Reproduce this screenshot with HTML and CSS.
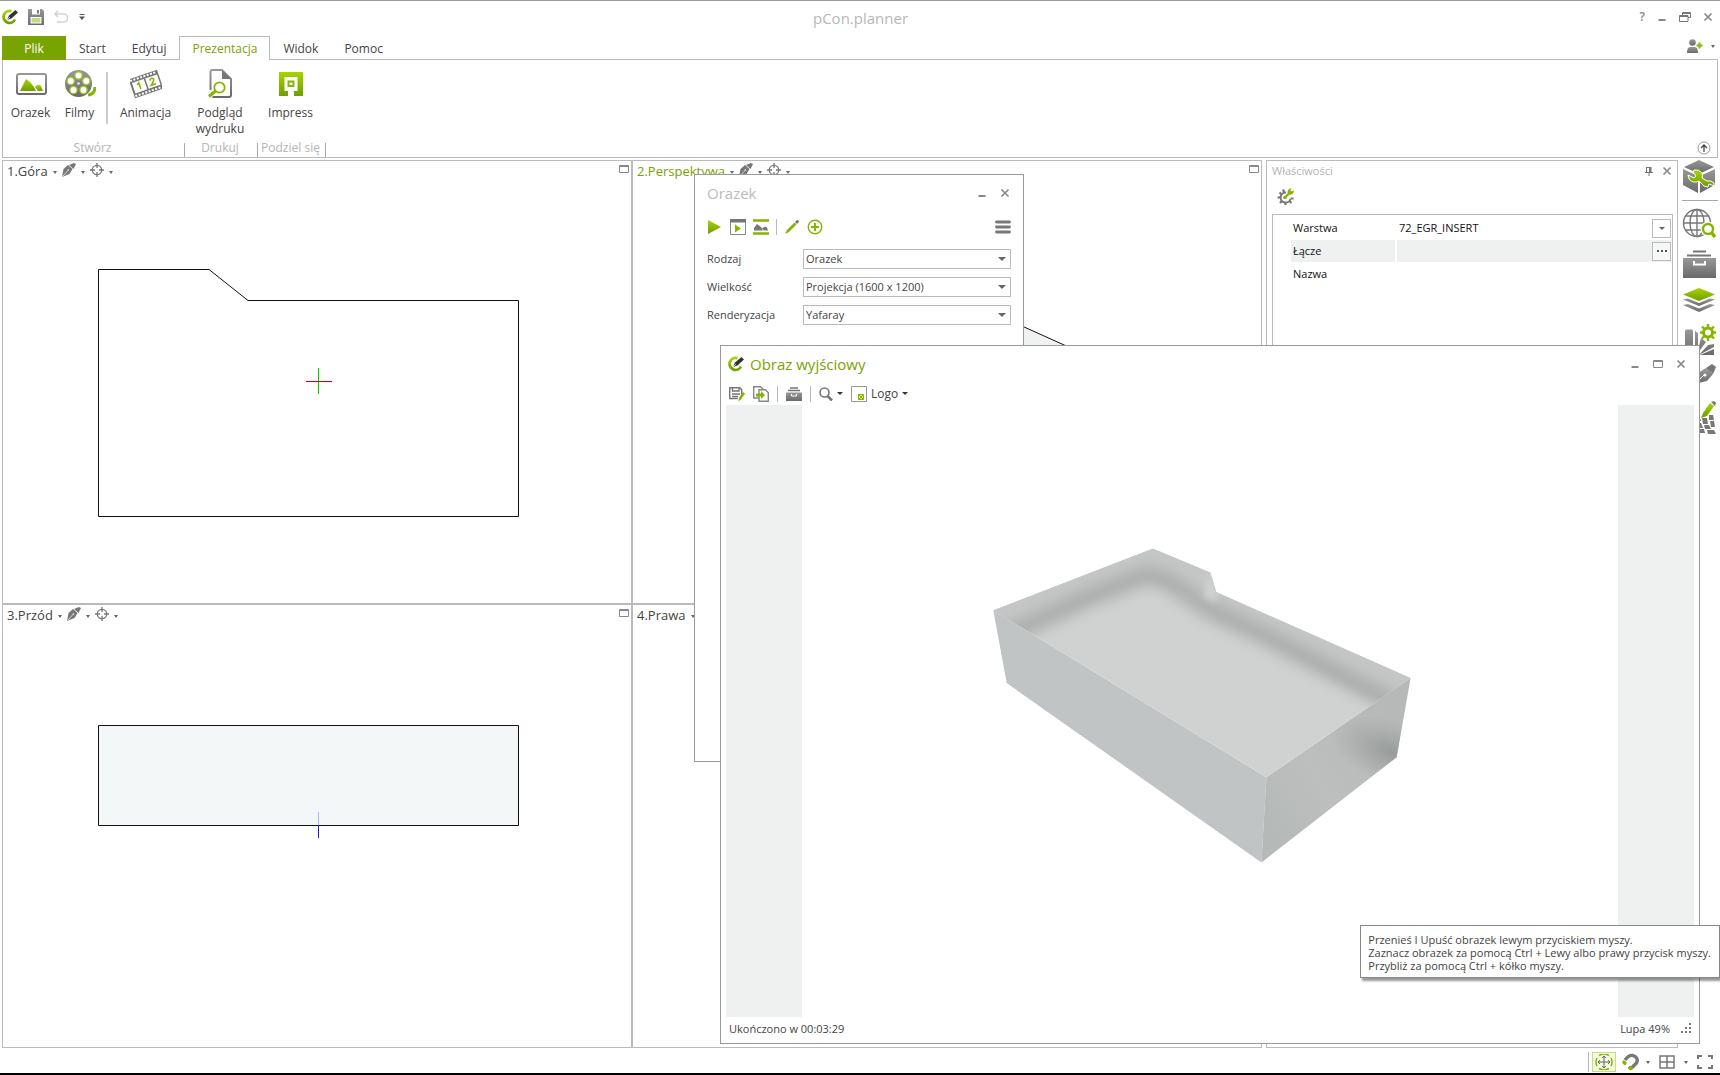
FILE: index.html
```html
<!DOCTYPE html>
<html lang="pl">
<head>
    <meta charset="UTF-8">
    <title>pCon.planner</title>
    <meta name="viewport" content="width=device-width, initial-scale=1.0">
    <link rel="stylesheet" href="styles.css">
</head>
<body>
    <!-- shared icons -->
    <svg class="sprite" aria-hidden="true">
        <defs>
            <linearGradient id="green" x1="0" y1="0" x2="0" y2="1">
                <stop offset="0" stop-color="#a8d400"/>
                <stop offset="1" stop-color="#6f9e00"/>
            </linearGradient>
            <linearGradient id="gray" x1="0" y1="0" x2="0" y2="1">
                <stop offset="0" stop-color="#989898"/>
                <stop offset="1" stop-color="#6a6a6a"/>
            </linearGradient>
        </defs>
        <symbol id="i-logo" viewBox="0 0 16 16">
            <path d="M9.500 2.200A6 6 0 1 0 13 10.500" fill="none" stroke="url(#green)" stroke-width="2.800"/>
            <path d="M5 11l2-4.500L13.500 1 16 3.500 9.500 9.500z" fill="#333"/>
            <path d="M5 11l3-3" stroke="#fff" stroke-width=".7"/>
        </symbol>
        <symbol id="i-pen" viewBox="0 0 14 14">
            <path d="M0 14l1.500-8L6 2l4.500 4L7.500 11z" fill="#777"/>
            <path d="M7 2l5-2 2 1-2.500 5z" fill="#777"/>
            <path d="M.5 13.500L6 7.500" stroke="#fff" stroke-width=".7"/>
            <circle cx="6.300" cy="7" r=".8" fill="#fff"/>
        </symbol>
        <symbol id="i-target" viewBox="0 0 14 14">
            <circle cx="7" cy="7" r="4.700" fill="none" stroke="#777" stroke-width="1.300"/>
            <path d="M7 0v5M7 9v5M0 7h5M9 7h5" stroke="#777" stroke-width="1.300"/>
        </symbol>
        <symbol id="i-close" viewBox="0 0 12 12">
            <path d="M2.500 2.500l7 7M9.500 2.500l-7 7" stroke="#888" stroke-width="1.700"/>
        </symbol>
        <symbol id="i-min" viewBox="0 0 12 12">
            <path d="M2.500 9h7" stroke="#888" stroke-width="2"/>
        </symbol>
        <symbol id="i-max" viewBox="0 0 12 12">
            <path d="M1.500 2.500h9v7h-9zM1.500 3.500h9" fill="none" stroke="#888"/>
        </symbol>
    </svg>

    <div class="app">
        <header class="titlebar">
            <div class="quick">
                <svg class="icon16"><use href="#i-logo"/></svg>
                <button class="plain" aria-label="Zapisz">
                    <svg class="icon16" viewBox="0 0 16 16">
                        <path d="M0 0h14l2 2v14H0z" fill="url(#gray)"/>
                        <path d="M4 0h8v5.500H4z" fill="#fff"/><path d="M9 1h2v3.500H9z" fill="#777"/>
                        <path d="M2.500 8h11v6.500h-11z" fill="#fff"/><path d="M3.500 9h9v4.500h-9z" fill="#c4dd84"/>
                    </svg>
                </button>
                <button class="plain" aria-label="Cofnij">
                    <svg class="icon14" viewBox="0 0 14 14"><path d="M4 1L1 4l3 3M1 4h8.500a3.500 3.500 0 0 1 0 8H3" fill="none" stroke="#d4d4d4" stroke-width="1.600"/></svg>
                </button>
                <button class="plain" aria-label="Dostosuj">
                    <svg class="icon8" viewBox="0 0 8 8"><path d="M1.500 1.500h5" stroke="#555"/><path d="M1 3.500h6L4 7z" fill="#555"/></svg>
                </button>
            </div>
            <h1 class="app-title">pCon.planner</h1>
            <div class="win-buttons main-buttons">
                <button class="plain help" aria-label="Pomoc">?</button>
                <button class="plain" aria-label="Minimalizuj"><svg class="icon12"><use href="#i-min"/></svg></button>
                <button class="plain" aria-label="Przywróć">
                    <svg class="icon12" viewBox="0 0 12 12"><path d="M3.500 4V1.500h8v5H9M.5 4.500H9v6H.5zM.5 5.500H9M3.500 2.500h8" fill="none" stroke="#777"/></svg>
                </button>
                <button class="plain" aria-label="Zamknij"><svg class="icon12"><use href="#i-close"/></svg></button>
            </div>
        </header>

        <nav class="tabs">
            <button class="tab file">Plik</button>
            <button class="tab">Start</button>
            <button class="tab">Edytuj</button>
            <button class="tab active">Prezentacja</button>
            <button class="tab">Widok</button>
            <button class="tab">Pomoc</button>
            <button class="plain user" aria-label="Konto">
                <svg width="16" height="14" viewBox="0 0 16 14">
                    <circle cx="5.500" cy="3.500" r="3.300" fill="url(#gray)"/>
                    <path d="M0 14c0-4 1-6 3-6h5c2 0 3 2 3 6z" fill="url(#gray)"/>
                    <path d="M12.500 3.500v6M9.500 6.500h6" stroke="#86b500" stroke-width="2"/>
                </svg>
                <i class="arrow small"></i>
            </button>
        </nav>

        <section class="ribbon">
            <div class="group create">
                <div class="group-items">
                    <button class="tool">
                        <svg viewBox="0 0 32 30">
                            <rect x="2" y="5" width="29" height="20" rx="2" fill="#fff" stroke="url(#gray)" stroke-width="2"/>
                            <path d="M5 22l6-12 4 3 4 5 2 4z" fill="url(#green)"/>
                            <path d="M20 18q3-4 6-1l2 5h-5z" fill="url(#green)"/>
                        </svg>
                        Orazek
                    </button>
                    <button class="tool">
                        <svg viewBox="0 0 32 30">
                            <path d="M24 26q7-1 7-8" fill="none" stroke="#86b500" stroke-width="3"/>
                            <circle cx="14.500" cy="14.500" r="13.500" fill="url(#gray)"/>
                            <g fill="#fff" stroke="#a3cc1c" stroke-width="1.200">
                                <circle cx="14.500" cy="6.500" r="3.600"/><circle cx="22.300" cy="12" r="3.600"/>
                                <circle cx="19.500" cy="21" r="3.600"/><circle cx="9.500" cy="21" r="3.600"/>
                                <circle cx="6.700" cy="12" r="3.600"/>
                            </g>
                            <circle cx="14.500" cy="14.500" r="1.300" fill="#eee"/>
                        </svg>
                        Filmy
                    </button>
                    <span class="sep"></span>
                    <button class="tool wide">
                        <svg viewBox="0 0 32 30">
                            <g transform="rotate(-19 16 15)">
                                <path d="M1 5h30v20H1z" fill="#777"/>
                                <path d="M3 9.500h12.500v11H3zM17 9.500h12.500v11H17z" fill="#fff"/>
                                <path d="M2 7h28M2 23h28" stroke="#fff" stroke-width="2" stroke-dasharray="2 1.500"/>
                                <path d="M7.500 13l2-1.500V18M20.500 13q2.500-3 4.300-.5 0 2-4.300 5.500H25.500" fill="none" stroke="#86b500" stroke-width="1.600"/>
                            </g>
                        </svg>
                        Animacja
                    </button>
                </div>
                <div class="group-label">Stwórz</div>
            </div>
            <div class="group print">
                <div class="group-items">
                    <button class="tool wide">
                        <svg viewBox="0 0 32 30">
                            <path d="M6.500 21V3q0-2 2-2H18l9 9v16q0 2-2 2H8.500" fill="none" stroke="url(#gray)" stroke-width="2"/>
                            <path d="M18 1l9 9h-9z" fill="#777"/>
                            <circle cx="15.500" cy="18.500" r="5.200" fill="#fff" stroke="#86b500" stroke-width="1.800"/>
                            <path d="M11.500 22L5 27.500" stroke="#86b500" stroke-width="3"/>
                        </svg>
                        Podgląd wydruku
                    </button>
                </div>
                <div class="group-label">Drukuj</div>
            </div>
            <div class="group share">
                <div class="group-items">
                    <button class="tool wide">
                        <svg viewBox="0 0 32 30">
                            <path d="M4 3h24v24H4z" fill="url(#green)"/>
                            <path d="M9.500 8h13v14h-3.500v5h-6v-5H9.500z" fill="#fff"/>
                            <path d="M12.500 11.500h7v6.500h-7z" fill="#86b500"/>
                            <path d="M14.500 13.500h3v2.500h-3z" fill="#fff"/>
                        </svg>
                        Impress
                    </button>
                </div>
                <div class="group-label">Podziel się</div>
            </div>
            <button class="plain collapse" aria-label="Zwiń wstążkę">
                <svg width="14" height="14" viewBox="0 0 14 14"><circle cx="7" cy="7" r="6" fill="#fff" stroke="#999"/><path d="M7 11V4M4 7l3-3 3 3" fill="none" stroke="#444" stroke-width="1.300"/></svg>
            </button>
        </section>

        <main class="workspace">
            <div class="viewports">
                <section class="viewport">
                    <div class="vp-head">
                        <span>1.Góra</span><i class="arrow small"></i>
                        <svg class="icon14"><use href="#i-pen"/></svg><i class="arrow small"></i>
                        <svg class="icon14"><use href="#i-target"/></svg><i class="arrow small"></i>
                        <svg class="icon12 vp-max"><use href="#i-max"/></svg>
                    </div>
                    <svg class="scene" viewBox="0 0 628 422">
                        <path d="M95.500 88.500H206L245 119.500H515.500V335.500H95.500z" fill="none" stroke="#111"/>
                        <path d="M315.500 187v26" stroke="#0c0"/>
                        <path d="M303 200.500h26" stroke="#c00"/>
                    </svg>
                </section>
                <section class="viewport">
                    <div class="vp-head current">
                        <span>2.Perspektywa</span><i class="arrow small"></i>
                        <svg class="icon14"><use href="#i-pen"/></svg><i class="arrow small"></i>
                        <svg class="icon14"><use href="#i-target"/></svg><i class="arrow small"></i>
                        <svg class="icon12 vp-max"><use href="#i-max"/></svg>
                    </div>
                    <svg class="scene" viewBox="0 0 628 422">
                        <path d="M280 96L560 222V300H280z" fill="#f0f2f2"/>
                        <path d="M280 96L560 222" stroke="#111"/>
                    </svg>
                </section>
                <section class="viewport">
                    <div class="vp-head">
                        <span>3.Przód</span><i class="arrow small"></i>
                        <svg class="icon14"><use href="#i-pen"/></svg><i class="arrow small"></i>
                        <svg class="icon14"><use href="#i-target"/></svg><i class="arrow small"></i>
                        <svg class="icon12 vp-max"><use href="#i-max"/></svg>
                    </div>
                    <svg class="scene" viewBox="0 0 628 422">
                        <path d="M95.500 100.500H515.500V200.500H95.500z" fill="#f4f7f8" stroke="#111"/>
                        <path d="M315.500 187v13" stroke="#b4b4f4"/>
                        <path d="M315.500 200v13" stroke="#22c"/>
                    </svg>
                </section>
                <section class="viewport">
                    <div class="vp-head">
                        <span>4.Prawa</span><i class="arrow small"></i>
                    </div>
                </section>
            </div>

            <aside class="props">
                <div class="props-head">
                    <h2>Właściwości</h2>
                    <button class="plain" aria-label="Przypnij">
                        <svg class="icon12" viewBox="0 0 12 12"><path d="M3.500 2v5M3 2.500h5M2 7.500h8M6 7v4" stroke="#777" fill="none"/><path d="M6 2h2.500v5H6z" fill="#777"/></svg>
                    </button>
                    <button class="plain" aria-label="Zamknij"><svg class="icon12"><use href="#i-close"/></svg></button>
                </div>
                <div class="props-tools">
                    <button class="plain" aria-label="Ustawienia">
                        <svg width="17" height="17" viewBox="0 0 17 17">
                            <path d="M9 4.600a5 5 0 1 0 4.500 6" fill="none" stroke="#777" stroke-width="2"/>
                            <path d="M6 1.500l1 2.500M2.500 4.500l1.800 1.600M.5 9.500H3M3 15l1.800-2M8.500 14.500V17M12.500 13l1.800 2M14 10.500h2.500" stroke="#777" stroke-width="2.200"/>
                            <path d="M8 9.500l4.500-4.500" stroke="#86b500" stroke-width="2.400"/>
                            <path d="M10.500 4.500q0-3.500 3.500-4.500l-.5 2.500 1 1L17 2.500q0 3-3.500 4.500z" fill="#86b500"/>
                            <circle cx="8" cy="9.500" r="1.800" fill="#86b500"/>
                        </svg>
                    </button>
                </div>
                <div class="props-list">
                    <div class="prop">
                        <label for="layer">Warstwa</label>
                        <input id="layer" value="72_EGR_INSERT">
                        <button class="cell-btn" aria-label="Wybierz"><i class="arrow"></i></button>
                    </div>
                    <div class="prop selected">
                        <label for="link">Łącze</label>
                        <input id="link" value="">
                        <button class="cell-btn" aria-label="Więcej"><svg width="12" height="4" viewBox="0 0 12 4"><path d="M1 1h2v2H1zM5 1h2v2H5zM9 1h2v2H9z" fill="#555"/></svg></button>
                    </div>
                    <div class="prop">
                        <label for="name">Nazwa</label>
                        <input id="name" value="">
                    </div>
                </div>
            </aside>

            <nav class="side">
                <button class="plain" aria-label="Właściwości">
                    <svg width="34" height="34" viewBox="0 0 34 34">
                        <path d="M17 0l15 7-15 7L2 7z" fill="url(#gray)"/>
                        <path d="M1 9l15 7v17L1 25z" fill="url(#gray)"/><path d="M33 9l-15 7v17l15-8z" fill="url(#gray)"/>
                        <path d="M12 10q5-1 8 3 1 3 0 5l5 3q4-1 7 2v3l-5-2-1 3-4-1-5-5q-6 3-10-2l-1-4 6 3 2-2-3-4z" fill="url(#green)" stroke="#fff"/>
                    </svg>
                </button>
                <span class="side-sep"></span>
                <button class="plain" aria-label="Katalog online">
                    <svg width="34" height="32" viewBox="0 0 34 32">
                        <g fill="none" stroke="#777" stroke-width="1.400">
                            <circle cx="15" cy="15" r="13.500"/><ellipse cx="15" cy="15" rx="7" ry="13.500"/>
                            <path d="M15 1.500v27M1.500 15h27M3.500 8h23M3.500 22h23"/>
                        </g>
                        <circle cx="26" cy="21" r="5" fill="#fff" stroke="#fff" stroke-width="5"/>
                        <circle cx="26" cy="21" r="5" fill="#fff" stroke="#86b500" stroke-width="2.400"/>
                        <path d="M29 24l4 5" stroke="#86b500" stroke-width="3.500"/>
                    </svg>
                </button>
                <button class="plain" aria-label="Archiwum">
                    <svg width="34" height="32" viewBox="0 0 34 32">
                        <path d="M11 3.500h13M5 7.500h24" stroke="#777" stroke-width="2"/>
                        <path d="M1 10h33v20H1z" fill="url(#gray)"/>
                        <path d="M12 13v3.500h11V13" fill="none" stroke="#fff" stroke-width="2"/>
                    </svg>
                </button>
                <button class="plain" aria-label="Warstwy">
                    <svg width="34" height="28" viewBox="0 0 34 28">
                        <path d="M17 0l16 6.500L17 13 1 6.500z" fill="url(#green)"/>
                        <path d="M1 11.500l5-1L17 15l11-4.500 5 1L17 18z" fill="url(#gray)"/>
                        <path d="M1 17l5-1 11 4.500L28 16l5 1-16 7z" fill="url(#gray)"/>
                    </svg>
                </button>
                <button class="plain" aria-label="Materiały">
                    <svg width="34" height="32" viewBox="0 0 34 32">
                        <path d="M3 7q0-1.500 1.500-1.500h5Q11 5.500 11 7v24H3z" fill="url(#gray)"/>
                        <path d="M13 31V7l3 2v12zM15 30l4-16 5 4zM17 31l9-10 6-1v3zM18 31l14-6v6z" fill="url(#gray)"/>
                        <circle cx="26" cy="8.500" r="8" fill="#fff"/>
                        <circle cx="26" cy="8.500" r="4.500" fill="#fff" stroke="#86b500" stroke-width="3"/>
                        <path d="M26 0v4M26 13v4M18 8.500h4M30 8.500h4M20 2.500l3 3M29 11.500l3 3M32 2.500l-3 3M20 14.500l3-3" stroke="#86b500" stroke-width="2.400"/>
                    </svg>
                </button>
                <button class="plain" aria-label="Rysuj">
                    <svg width="34" height="20" viewBox="0 0 34 20">
                        <path d="M12 20l4-11 8-5 7 6-6 7z" fill="url(#gray)"/>
                        <path d="M24 4l6-4 4 3-3 7z" fill="#777"/>
                        <path d="M14 19l8-8" stroke="#fff"/><circle cx="23" cy="11" r="1.500" fill="#fff"/>
                    </svg>
                </button>
                <button class="plain last" aria-label="Edytuj siatkę">
                    <svg width="34" height="34" viewBox="0 0 34 34">
                        <path d="M13 14h4l2 6h-5zM20 17h5l1 6h-5zM27 14h4l1 5h-5zM14 22h5l2 5h-6zM22 24h5l2 4h-6zM28 20h4l1 6h-4zM16 28h6l1 4h-6zM25 29h7l2 4h-8z" fill="#777"/>
                        <path d="M17 18l2-6 9-12 5 4-9 12z" fill="#fff"/>
                        <path d="M19 17l2-5 7-10 4 3-7 10z" fill="url(#green)"/>
                        <path d="M29 1l3-1 2 2-1 3z" fill="#777"/>
                    </svg>
                </button>
            </nav>
        </main>

        <footer class="status">
            <div class="status-group">
                <button class="snap" aria-label="Nawigacja">
                    <svg width="18" height="16" viewBox="0 0 18 16">
                        <path d="M9 2v12M3 8h12M7 4l2-2 2 2M7 12l2 2 2-2M5 6L3 8l2 2M13 6l2 2-2 2" fill="none" stroke="#666"/>
                        <path d="M4 1.500Q7 0 9 0t5 1.500M4 14.500Q7 16 9 16t5-1.500M2 4Q0 8 2 12M16 4q2 4 0 8" fill="none" stroke="#86b500" stroke-width="1.500"/>
                    </svg>
                </button>
                <button class="plain" aria-label="Przyciąganie">
                    <svg width="18" height="18" viewBox="0 0 18 18">
                        <path d="M3 7q4-5.500 8-4.500 6 2 3.500 7.500L9.500 15" fill="none" stroke="#777" stroke-width="3.400"/>
                        <path d="M1.500 7.500l3 2-1.500 2.500L.5 10zM8 13l3 2.500L8.500 17 6 15z" fill="#86b500" stroke="#86b500"/>
                    </svg>
                </button>
                <i class="arrow small"></i>
            </div>
            <button class="plain" aria-label="Układ widoków">
                <svg width="16" height="16" viewBox="0 0 16 16"><path d="M1 2h14v12H1zM8 2v12M1 8h14" fill="none" stroke="#777" stroke-width="1.500"/></svg>
            </button>
            <i class="arrow small"></i>
            <button class="plain" aria-label="Pełny ekran">
                <svg width="16" height="16" viewBox="0 0 16 16"><path d="M5 2H1v3M11 2h4v3M5 14H1v-3M11 14h4v-3" fill="none" stroke="#777" stroke-width="2"/></svg>
            </button>
        </footer>
    </div>

    <!-- render settings window -->
    <div class="window settings">
        <div class="window-head">
            <h2>Orazek</h2>
            <div class="win-buttons">
                <button class="plain" aria-label="Minimalizuj"><svg class="icon12"><use href="#i-min"/></svg></button>
                <button class="plain" aria-label="Zamknij"><svg class="icon12"><use href="#i-close"/></svg></button>
            </div>
        </div>
        <div class="settings-tools">
            <button class="plain" aria-label="Start"><svg class="icon16" viewBox="0 0 16 16"><path d="M1 1l13 7-13 7z" fill="url(#green)"/></svg></button>
            <button class="plain" aria-label="Podgląd"><svg class="icon16" viewBox="0 0 16 16"><path d="M.5.5h15v15H.5z" fill="#fff" stroke="#888"/><path d="M0 0h16v3.500H0z" fill="#777"/><path d="M5 5.500l6 4-6 4z" fill="#86b500"/></svg></button>
            <button class="plain" aria-label="Tło"><svg class="icon16" viewBox="0 0 16 16"><path d="M0 1.500h16M0 14.500h16" stroke="#86b500" stroke-width="2.600"/><path d="M1 11.500V9l3-4 4 3 2 3.500zM9 9.500q3-3 5-1l1 3h-4z" fill="#777"/></svg></button>
            <span class="tool-sep"></span>
            <button class="plain" aria-label="Edytuj"><svg class="icon16" viewBox="0 0 16 16"><path d="M1 15l2-4 7.500-7.500 2 2L5 13z" fill="#86b500"/><path d="M11 3l2-2q2 0 2 2l-2 2z" fill="#777"/></svg></button>
            <button class="plain" aria-label="Dodaj"><svg class="icon16" viewBox="0 0 16 16"><circle cx="8" cy="8" r="6.800" fill="none" stroke="#86b500" stroke-width="1.400"/><path d="M8 4v8M4 8h8" stroke="#86b500" stroke-width="2"/></svg></button>
            <button class="plain menu" aria-label="Menu"><svg class="icon16" viewBox="0 0 16 16"><path d="M1.500 3h13M1.500 8h13M1.500 13h13" stroke="#777" stroke-width="2.800" stroke-linecap="round"/></svg></button>
        </div>
        <div class="fields">
            <label for="kind">Rodzaj</label>
            <div class="drop"><select id="kind"><option>Orazek</option></select></div>
            <label for="size">Wielkość</label>
            <div class="drop"><select id="size"><option>Projekcja (1600 x 1200)</option></select></div>
            <label for="render">Renderyzacja</label>
            <div class="drop"><select id="render"><option>Yafaray</option></select></div>
        </div>
    </div>

    <!-- rendered image window -->
    <div class="window output">
        <div class="window-head">
            <svg class="icon16"><use href="#i-logo"/></svg>
            <h2>Obraz wyjściowy</h2>
            <div class="win-buttons">
                <button class="plain" aria-label="Minimalizuj"><svg class="icon12"><use href="#i-min"/></svg></button>
                <button class="plain" aria-label="Maksymalizuj"><svg class="icon12"><use href="#i-max"/></svg></button>
                <button class="plain" aria-label="Zamknij"><svg class="icon12"><use href="#i-close"/></svg></button>
            </div>
        </div>
        <div class="output-tools">
            <button class="plain" aria-label="Zapisz jako"><svg class="icon16" viewBox="0 0 16 16"><path d="M.7 1.700h10l2 2v5M.7 1v11.500h8" fill="none" stroke="#777" stroke-width="1.500"/><path d="M3.500 1v4h6.500V1M3 8h8M3 10.500h6" fill="none" stroke="#777" stroke-width="1.400"/><path d="M9.500 15.500l.5-3.500 4-6 2 1.500-4 6z" fill="#86b500"/></svg></button>
            <button class="plain" aria-label="Kopiuj"><svg class="icon16" viewBox="0 0 16 16"><path d="M.7.700h7l2 2V12h-9z" fill="#fff" stroke="#888" stroke-width="1.400"/><path d="M6 3.700h6.500l2.800 3v8.600H6z" fill="#fff" stroke="#888" stroke-width="1.400"/><path d="M3 7.500h5V5l4 4-4 4v-2.500H3z" fill="#86b500"/></svg></button>
            <span class="tool-sep"></span>
            <button class="plain" aria-label="Archiwum"><svg class="icon16" viewBox="0 0 16 16"><path d="M4 2h8M2 4.500h12" stroke="#777" stroke-width="1.300"/><path d="M0 6.500h16V15H0z" fill="url(#gray)"/><path d="M5.500 8v2h5V8" fill="none" stroke="#fff"/></svg></button>
            <span class="tool-sep"></span>
            <button class="plain" aria-label="Lupa"><svg class="icon14" viewBox="0 0 14 14"><circle cx="5.500" cy="5.500" r="4.500" fill="none" stroke="#777" stroke-width="1.600"/><path d="M8.500 9l4.500 4.500" stroke="#777" stroke-width="2.600"/></svg><i class="arrow dark"></i></button>
            <button class="plain" aria-label="Logo"><svg class="icon16" viewBox="0 0 16 16"><path d="M.5.5h15v15H.5z" fill="#fff" stroke="#999"/><path d="M7.500 8.500h5v5h-5zM7.500 8.500l5 5M12.500 8.500l-5 5" fill="#dcefa0" stroke="#86b500"/></svg>Logo<i class="arrow dark"></i></button>
        </div>
        <div class="canvas">
            <svg class="render" viewBox="0 0 814 611">
                <defs>
                    <clipPath id="inside"><path d="M42 240L520 55 692 127 710 185 1292 443 860 740z"/></clipPath>
                    <filter id="soft" x="-20%" y="-20%" width="140%" height="140%"><feGaussianBlur stdDeviation="24"/></filter>
                    <filter id="crease" x="-50%" y="-20%" width="200%" height="140%"><feGaussianBlur stdDeviation="9"/></filter>
                    <linearGradient id="side-shade" gradientUnits="userSpaceOnUse" x1="850" y1="860" x2="1270" y2="600">
                        <stop offset="0" stop-color="#b5b9b8"/><stop offset=".4" stop-color="#bcbfbe"/><stop offset="1" stop-color="#b6b9b8"/>
                    </linearGradient>
                    <radialGradient id="side-dark" gradientUnits="userSpaceOnUse" cx="0" cy="0" r="190" gradientTransform="translate(1235 665) rotate(20) scale(1 .5)">
                        <stop offset="0" stop-color="#8a8e8d" stop-opacity=".7"/><stop offset="1" stop-color="#929695" stop-opacity="0"/>
                    </radialGradient>
                </defs>
                <g transform="translate(177 125) scale(.33333)">
                    <g clip-path="url(#inside)">
                        <path d="M42 240L520 55 692 127 710 185 1292 443 860 740z" fill="#d0d2d2"/>
                        <!-- inner walls -->
                        <path d="M0 330L150 290 500 145 640 195 700 255 850 322 1160 505 1400 560 1400 350 700 0 500 0 0 200z" fill="#c5c7c7" filter="url(#crease)"/>
                        <path d="M60 325L160 280 340 197 500 135 560 150 700 245 850 315 1180 485 1300 550" fill="none" stroke="#a6a8a8" stroke-width="46" filter="url(#soft)"/>
                        <path d="M690 125L715 185 708 215 672 200z" fill="#d0d2d2" filter="url(#crease)"/>
                    </g>
                    <path d="M42 240L860 740 845 995 82 458z" fill="#c1c4c5"/>
                    <path d="M860 740L1292 443 1250 680 845 995z" fill="url(#side-shade)"/>
                    <path d="M860 740L1292 443 1250 680 845 995z" fill="url(#side-dark)"/>
                </g>
            </svg>
        </div>
        <div class="output-foot">
            <span>Ukończono w 00:03:29</span>
            <span class="zoom">Lupa 49%</span>
            <svg width="12" height="12" viewBox="0 0 12 12"><path d="M9 0h2v2H9zM9 4h2v2H9zM9 8h2v2H9zM5 4h2v2H5zM5 8h2v2H5zM1 8h2v2H1z" fill="#777"/></svg>
        </div>
    </div>

    <div class="hint" role="tooltip">
        Przenieś I Upuść obrazek lewym przyciskiem myszy.<br>
        Zaznacz obrazek za pomocą Ctrl + Lewy albo prawy przycisk myszy.<br>
        Przybliż za pomocą Ctrl + kółko myszy.
    </div>
</body>
</html>
```
FILE: styles.css
```css
* { box-sizing: border-box; }
body {
    margin: 0;
    height: 100vh;
    position: relative;
    overflow: hidden;
    background: #fff;
    color: #444;
    font-family: "Open Sans", "Noto Sans", sans-serif;
    font-size: 12px;
    line-height: 16px;
}
h1, h2 { margin: 0; font-weight: normal; }
svg { display: block; flex: none; }
button, input, select { font: inherit; color: inherit; }
.sprite { position: absolute; width: 0; height: 0; }
.icon8 { width: 8px; height: 8px; }
.icon12 { width: 12px; height: 12px; }
.icon14 { width: 14px; height: 14px; }
.icon16 { width: 16px; height: 16px; }
.plain {
    display: flex;
    align-items: center;
    padding: 0;
    border: none;
    background: none;
}
.arrow {
    flex: none;
    border: 3px solid transparent;
    border-top-color: #666;
    border-bottom: none;
}
.arrow.small { border-width: 3px 2px 0; }
.arrow.dark { border-top-color: #333; }

.app {
    display: flex;
    flex-direction: column;
    height: 100%;
    border-top: 1px solid #999;
    border-bottom: 2px solid #000;
}

/* title bar */
.titlebar {
    display: flex;
    align-items: center;
    height: 35px;
    padding: 0 6px 4px 2px;
}
.quick {
    display: flex;
    align-items: center;
    gap: 10px;
    flex: 1;
}
.app-title { padding: 2px 0 0 5px; font-size: 15px; line-height: 20px; color: #b8b8b8; }
.win-buttons { display: flex; align-items: center; gap: 11px; margin-left: auto; }
.main-buttons { flex: 1; justify-content: flex-end; }
.help { font-size: 12px; font-weight: 600; color: #888; }

/* tabs */
.tabs {
    display: flex;
    height: 24px;
    padding: 0 2px;
    position: relative;
    z-index: 1;
    margin-bottom: -1px;
}
.tab {
    padding: 1px 12px 0;
    border: 1px solid transparent;
    border-bottom: none;
    background: none;
}
.tab.file {
    width: 64px;
    padding-top: 0;
    background: #78a300;
    color: #fff;
}
.tab.active {
    border-color: #bbb;
    background: #fff;
    color: #78a300;
}
.user { margin-left: auto; gap: 8px; padding: 0 3px 4px 0; }

/* ribbon */
.ribbon {
    display: flex;
    height: 99px;
    margin: 0 2px 2px;
    border: 1px solid #bbb;
}
.group { display: flex; flex-direction: column; }
.create { width: 182px; }
.print { width: 73px; }
.share { width: 68px; }
.group-items { display: flex; flex: 1; padding: 9px 3px 0 0; }
.create .group-items { padding-left: 3px; }
.print .group-items, .share .group-items { justify-content: center; }
.tool {
    display: flex;
    flex-direction: column;
    align-items: center;
    gap: 6px;
    width: 49px;
    padding: 0;
    border: none;
    background: none;
}
.tool.wide { width: 67px; }
.tool svg { width: 32px; height: 30px; }
.sep { width: 2px; height: 52px; margin: 3px 4px 0 2px; background: #ccc; }
.group-label {
    height: 14px;
    padding-right: 2px;
    line-height: 10px;
    text-align: center;
    color: #b4b4b4;
    border-right: 1px solid #aaa;
}
.collapse { margin: auto 6px 2px auto; }

/* workspace */
.workspace {
    display: flex;
    flex: 1;
    min-height: 0;
    margin: 0 2px;
}
.viewports {
    flex: 1;
    display: grid;
    grid-template: 1fr 1fr / 1fr 1fr;
    gap: 2px;
    margin-right: 4px;
    border: 1px solid #bbb;
    background: #bbb;
}
.viewport {
    display: flex;
    flex-direction: column;
    min-width: 0;
    min-height: 0;
    background: #fff;
}
.vp-head {
    display: flex;
    align-items: center;
    gap: 5px;
    height: 20px;
    padding: 0 1px 0 4px;
    font-size: 13px;
}
.vp-head.current { color: #78a300; }
.vp-head .icon14 { margin-bottom: 3px; }
.vp-head .arrow { margin-top: 2px; }
.vp-max { margin: 0 0 4px auto; }
.scene { flex: 1; width: 100%; min-height: 0; }

/* properties */
.props {
    display: flex;
    flex-direction: column;
    width: 412px;
    padding: 0 4px 4px 5px;
    border: 1px solid #bbb;
}
.props-head { display: flex; align-items: center; gap: 6px; height: 20px; }
.props-head h2 { flex: 1; font-size: 11px; color: #b4b4b4; }
.props-tools { padding: 7px 5px 9px; }
.props-list {
    flex: 1;
    padding: 2px 1px 0 18px;
    border: 1px solid #bbb;
    font-size: 11px;
    color: #111;
}
.prop {
    display: flex;
    align-items: center;
    height: 22px;
    margin-bottom: 1px;
    padding-left: 2px;
}
.prop label { width: 102px; }
.prop input {
    flex: 1;
    align-self: stretch;
    min-width: 0;
    padding: 0 0 0 2px;
    border: none;
    border-left: 2px solid #fff;
    background: none;
}
.prop.selected { background: #eff1f1; }
.cell-btn {
    display: flex;
    align-items: center;
    justify-content: center;
    width: 19px;
    height: 19px;
    padding: 0;
    border: 1px solid #bbb;
    background: #fff;
}
.selected .cell-btn { background: #f6f7f7; }

/* right tool strip */
.side {
    display: flex;
    flex-direction: column;
    gap: 8px;
    width: 40px;
    padding: 0 0 0 4px;
}
.side-sep { height: 1px; margin: -2px 0 -1px; background: #aaa; flex: none; }
.side .last { margin-top: 9px; }

/* status bar */
.status {
    display: flex;
    align-items: center;
    justify-content: flex-end;
    gap: 9px;
    height: 25px;
    padding: 3px 7px 0 0;
}
.status-group {
    display: flex;
    align-items: center;
    gap: 6px;
    padding-left: 3px;
    border-left: 1px solid #bbb;
}
.snap {
    display: flex;
    align-items: center;
    padding: 1px 2px;
    border: 1px solid #c5dd86;
    background: #f2f9dc;
}

/* floating windows */
.window {
    position: absolute;
    display: flex;
    flex-direction: column;
    border: 1px solid #999;
    background: #fff;
}
.window-head { display: flex; align-items: center; height: 36px; }
.window-head h2 { font-size: 15px; line-height: 20px; }
.settings {
    left: 694px;
    top: 174px;
    width: 330px;
    height: 588px;
    padding: 0 12px;
    font-size: 11px;
}
.settings h2 { color: #bbb; }
.settings-tools { display: flex; align-items: center; gap: 7px; height: 32px; }
.tool-sep { width: 1px; height: 16px; background: #bbb; }
.menu { margin-left: auto; }
.fields {
    display: grid;
    grid-template-columns: 88px 1fr;
    gap: 8px;
    align-items: center;
    padding-top: 6px;
}
.drop { position: relative; }
.drop::after {
    content: "";
    position: absolute;
    right: 5px;
    top: 8px;
    border: 4px solid transparent;
    border-top-color: #666;
    border-bottom: none;
    pointer-events: none;
}
.drop select {
    display: block;
    width: 100%;
    height: 20px;
    padding: 0 2px;
    appearance: none;
    border: 1px solid #bbb;
    border-radius: 0;
    background: #fff;
}

.output {
    left: 720px;
    top: 345px;
    right: 20px;
    bottom: 31px;
    padding: 0 5px;
}
.output .window-head { gap: 6px; padding: 0 7px 0 2px; }
.output h2 { color: #78a300; }
.output-tools { display: flex; align-items: center; gap: 8px; height: 23px; padding-left: 3px; }
.output-tools .plain { gap: 4px; }
.canvas { display: flex; flex: 1; min-height: 0; justify-content: center; background: #eff1f1; }
.render { height: 100%; background: #fff; }
.output-foot {
    display: flex;
    align-items: center;
    height: 26px;
    padding: 0 2px 2px 3px;
    font-size: 11px;
}
.zoom { margin: 0 10px 0 auto; }

.hint {
    position: absolute;
    right: 0;
    bottom: 97px;
    padding: 7px 8px 5px 7px;
    border: 1px solid #888;
    background: #fff;
    box-shadow: 2px 3px 2px #0006;
    font-size: 11px;
    line-height: 13px;
    white-space: nowrap;
}
```
